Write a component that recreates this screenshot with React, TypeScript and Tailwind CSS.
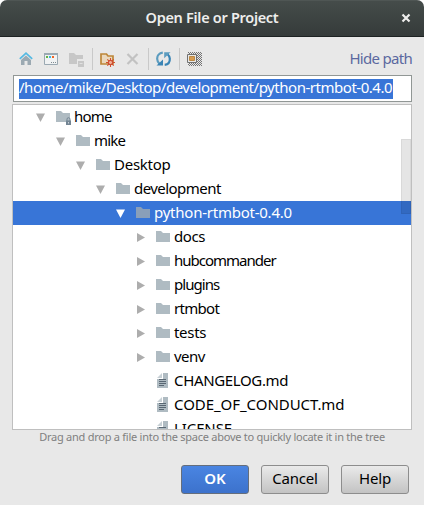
import React from "react";

type Entry = { name: string; depth: number; kind: "open" | "closed" | "file"; locked?: boolean; selected?: boolean; tracking: string };

const entries: Entry[] = [
  { name: "home", depth: 0, kind: "open", locked: true, tracking: "tracking-[-0.8px]" },
  { name: "mike", depth: 1, kind: "open", tracking: "tracking-[-0.8px]" },
  { name: "Desktop", depth: 2, kind: "open", tracking: "tracking-[-0.25px]" },
  { name: "development", depth: 3, kind: "open", tracking: "tracking-[-0.55px]" },
  { name: "python-rtmbot-0.4.0", depth: 4, kind: "open", selected: true, tracking: "tracking-[-0.24px]" },
  { name: "docs", depth: 5, kind: "closed", tracking: "tracking-[-0.4px]" },
  { name: "hubcommander", depth: 5, kind: "closed", tracking: "tracking-[-1px]" },
  { name: "plugins", depth: 5, kind: "closed", tracking: "tracking-[-0.95px]" },
  { name: "rtmbot", depth: 5, kind: "closed", tracking: "tracking-[-0.7px]" },
  { name: "tests", depth: 5, kind: "closed", tracking: "tracking-[-0.3px]" },
  { name: "venv", depth: 5, kind: "closed", tracking: "tracking-[-0.5px]" },
  { name: "CHANGELOG.md", depth: 5, kind: "file", tracking: "tracking-[-0.35px]" },
  { name: "CODE_OF_CONDUCT.md", depth: 5, kind: "file", tracking: "tracking-[-0.05px]" },
  { name: "LICENSE", depth: 5, kind: "file", tracking: "tracking-[-0.1px]" },
];

function Icon({ children, className = "" }: { children: React.ReactNode; className?: string }) {
  return (
    <svg className={`block h-4 w-4 shrink-0 ${className}`} viewBox="0 0 16 16" fill="none">
      {children}
    </svg>
  );
}

function Arrow({ kind, selected }: { kind: Entry["kind"]; selected?: boolean }) {
  return (
    <Icon>
      {kind === "open" && <path d="M3 4.6h9L7.5 13z" fill={selected ? "#fff" : "#adadad"} />}
      {kind === "closed" && <path d="M4 4v9l8-4.5z" fill="#adadad" />}
    </Icon>
  );
}

function FolderIcon({ locked, selected }: { locked?: boolean; selected?: boolean }) {
  return (
    <Icon>
      <path d="M1 2h5l2 2h7v9H1z" fill={selected ? "#8a9fb9" : "#afbbc2"} />
      {locked && (
        <g>
          <path d="M12 12V10.2a1.5 1.5 0 013 0V12" stroke="#738594" />
          <path d="M11 11.5h5V16h-5z" fill="#738594" />
          <path d="M13 13h1v1.5h-1z" fill="#c8d0d6" />
        </g>
      )}
    </Icon>
  );
}

function FileIcon() {
  return (
    <Icon>
      <path d="M8 0h5v15H2V6h6z" fill="#afbbc2" />
      <path d="M7 0v5H2z" fill="#c7d0d5" />
      <path d="M4 6.5h7M4 8.5h7M4 10.5h7M4 12.5h5" stroke="#596773" />
    </Icon>
  );
}

function Separator({ className }: { className: string }) {
  return <div className={`h-[22px] w-px bg-[#c9c9c9] ${className}`} />;
}

export default function App() {
  return (
    <div className="h-[505px] w-[424px] overflow-hidden bg-white font-['Noto_Sans',sans-serif] text-black">
      <div className="flex h-full flex-col overflow-hidden rounded-t-[7px] bg-[#e8e8e8]">
        <header className="grid h-[37px] shrink-0 grid-cols-[1fr_auto_1fr] items-center border-t border-b border-t-[#4f5654] border-b-[#1d2222] bg-linear-to-b from-[#454c4a] to-[#353b3a]">
          <span />
          <h1 className="pb-[3px] text-[14.5px] leading-5 font-semibold tracking-[-0.3px] text-[#eeeeec]">Open File or Project</h1>
          <svg className="mr-[13px] mb-px h-[10px] w-[10px] justify-self-end" viewBox="0 0 10 10">
            <path d="M1.5 1.5l7 7m0-7l-7 7" stroke="#eeeeec" strokeWidth="2.2" />
          </svg>
        </header>

        <div className="flex h-[38px] shrink-0 items-center pt-1.5 pr-3 pl-[18px]">
          <Icon>
            <path d="M3 9l5-4.6L13 9v5h-3.5v-4h-3v4H3z" fill="#9ba9b2" />
            <path d="M1.8 7.9L8 2.2l6.2 5.7" stroke="#55b9e2" strokeWidth="1.7" />
          </Icon>
          <Icon className="ml-[9px]">
            <path d="M1.5 2.5h13v11h-13z" fill="#f0f2f3" stroke="#9ba9b2" />
            <path d="M1 2h14v2H1z" fill="#9ba9b2" />
            <path d="M3 5h2v2H3z" fill="#62b543" />
            <path d="M6 5h2v2H6z" fill="#40b6e0" />
            <path d="M9 5h2v2H9z" fill="#f26522" />
            <path d="M8 11h1v1H8zM10 11h1v1h-1zM12 11h1v1h-1z" fill="#7f8b91" />
          </Icon>
          <Icon className="ml-[9px]">
            <path d="M1 2h5l2 2h7v4H9v5H1z" fill="#c7c7c7" />
            <path d="M10 10h6v6h-6z" fill="#c7c7c7" />
            <path d="M11.5 12.5h3" stroke="#e0e0e0" />
          </Icon>
          <Separator className="ml-2" />
          <Icon className="ml-[7px]">
            <path d="M1 3h5.5l1.5 2h5v8H1z" fill="#ead8bd" stroke="#bd8639" strokeWidth="1.7" />
            <path d="M10.5 7v9M6 11.5h9M7.3 8.3l6.4 6.4M13.7 8.3l-6.4 6.4" stroke="#d3502f" strokeWidth="1.1" />
            <circle cx="10.5" cy="11.5" r="2.1" fill="#f0b096" stroke="#c93b24" />
          </Icon>
          <Icon className="ml-[9px]">
            <path d="M2.5 3l10 10m0-10l-10 10" stroke="#c2c2c2" strokeWidth="2.2" />
          </Icon>
          <Separator className="ml-[7px]" />
          <Icon className="ml-[7px]">
            <path d="M6.8 1.6C3.2 2 1 4.8 1.2 8c.1 2 .8 3.5 2.2 4.8" stroke="#5c9cbf" strokeWidth="2.2" />
            <path d="M.5 14.5H7v-6z" fill="#3984b5" />
            <path d="M8.7 13.8c3.6-.4 5.3-3 5.1-6.2-.1-2-.8-3.1-2.2-4.4" stroke="#3984b5" strokeWidth="2.2" />
            <path d="M14.5 1.2H8.2v6z" fill="#5c9cbf" />
          </Icon>
          <Separator className="ml-[7px]" />
          <Icon className="ml-[7px]">
            <defs>
              <pattern id="dots" width="2" height="2" patternUnits="userSpaceOnUse">
                <path d="M0 0h1v1H0zM1 1h1v1H1z" fill="#747474" />
              </pattern>
            </defs>
            <path d="M1 1h14v14H1z" fill="url(#dots)" />
            <path d="M.5 3.5h9v8h-9z" fill="#e8e8e8" stroke="#717171" />
            <path d="M2.5 5.5h5v4h-5z" fill="#d99d51" stroke="#bb8945" />
          </Icon>
          <a className="ml-auto pb-[2px] text-[15px] leading-5 tracking-[-0.7px] text-[#5b68a0]">Hide path</a>
        </div>

        <div className="mr-3 ml-[13px] flex h-[27px] shrink-0 items-center border border-[#919795] bg-white pl-[5px]">
          <span className="h-5 w-[374px] bg-[#3875d7] text-[15px] leading-[17px] tracking-[-0.47px] whitespace-nowrap text-white">
            /home/mike/Desktop/development/python-rtmbot-0.4.0
          </span>
        </div>

        <div className="relative mx-3 mt-0.5 h-[326px] shrink-0 overflow-hidden border border-[#bfbfbf] bg-white">
          {entries.map((e) => (
            <div key={e.name} className={`flex h-6 items-center ${e.selected ? "bg-[#3875d7] text-white" : ""}`}>
              <div className="shrink-0" style={{ width: 20 + e.depth * 20 }} />
              <Arrow kind={e.kind} selected={e.selected} />
              <span className="w-1.5 shrink-0" />
              {e.kind === "file" ? <FileIcon /> : <FolderIcon locked={e.locked} selected={e.selected} />}
              <span className={`ml-[3px] pb-[2px] text-[15px] leading-[22px] whitespace-nowrap ${e.tracking}`}>{e.name}</span>
            </div>
          ))}
          <div className="absolute top-[34px] right-0 h-[75px] w-[10px] border border-black/5 bg-black/10" />
        </div>

        <p className="h-[15px] shrink-0 text-center text-[11px] leading-[14px] tracking-[-0.25px] text-[#808080]">
          Drag and drop a file into the space above to quickly locate it in the tree
        </p>

        <footer className="mt-5 mr-[15px] flex justify-end gap-3">
          <button className="h-[29px] w-[68px] rounded-[3px] border border-[#656e7c] bg-linear-to-b from-[#4a85e2] to-[#3c72cc] pb-[2px] text-[15px] leading-[25px] font-semibold text-white">OK</button>
          <button className="h-[29px] w-[68px] rounded-[3px] border border-[#8d8d8d] bg-linear-to-b from-[#eaeaea] to-[#c3c3c3] pb-[2px] text-[15px] leading-[25px] tracking-[-0.2px]">Cancel</button>
          <button className="h-[29px] w-[68px] rounded-[3px] border border-[#8d8d8d] bg-linear-to-b from-[#eaeaea] to-[#c3c3c3] pb-[2px] text-[15px] leading-[25px] tracking-[-0.2px]">Help</button>
        </footer>
      </div>
    </div>
  );
}
